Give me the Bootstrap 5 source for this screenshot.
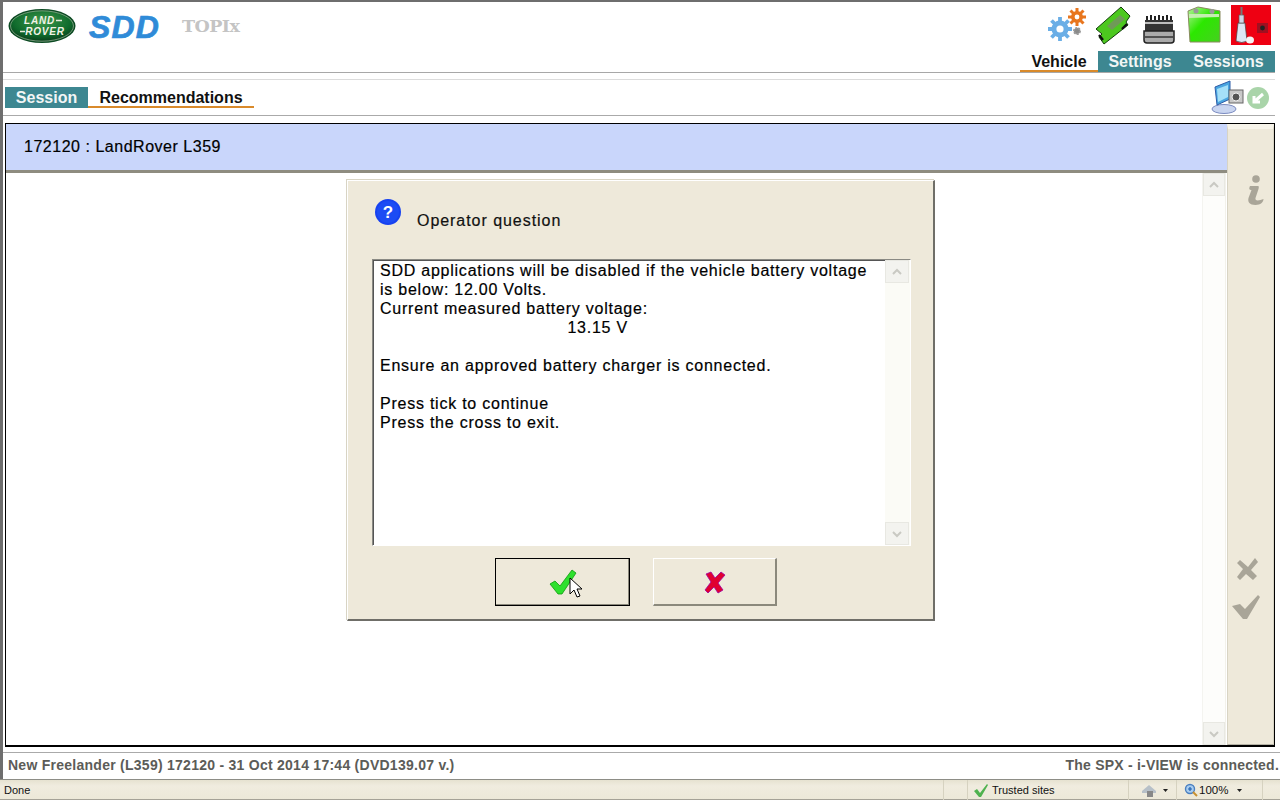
<!DOCTYPE html>
<html lang="en">
<head>
<meta charset="utf-8">
<title>SDD</title>
<link rel="stylesheet" href="https://cdn.jsdelivr.net/npm/bootstrap@5.3.0/dist/css/bootstrap.min.css">
<style>
html,body{height:100%;margin:0;overflow:hidden}
body{font-family:"Liberation Sans",Arial,sans-serif;background:#fff;color:#000}
.app-shell{width:1280px;height:800px;display:flex;flex-direction:column;background:#fff}
.app-area{height:779px;border-top:2px solid #6e6e6e;border-left:3px solid #6e6e6e;display:flex;flex-direction:column;position:relative}
.head-zone{height:71px;border-bottom:1px solid #a8a8a8;display:flex;justify-content:space-between;margin-right:5px;position:relative}
.brand-row{display:flex;align-items:flex-start;padding:6px 0 0 5px}
.sdd-word{font:italic bold 32px "Liberation Sans",sans-serif;color:#2f8bd8;margin-left:13px;line-height:38px;letter-spacing:1.1px;-webkit-text-stroke:.7px #2f8bd8}
.topix-word{font:bold 17.5px "DejaVu Serif",serif;color:#c4c4c4;margin-left:22px;line-height:36px;letter-spacing:-.5px}
.head-right{display:flex;flex-direction:column;align-items:flex-end}
.tool-icons{height:49px;display:flex;align-items:flex-start;padding:3px 4px 0 0}
.tool-icons svg{display:block;flex:none}
.tab-strip{display:flex;font-size:16px;font-weight:700;line-height:21px;height:21px;letter-spacing:0}
.tab-item{padding:0;text-align:center}
.tab-on{color:#111;box-shadow:inset 0 -2px 0 #d98a2b}
.tab-off{color:#f2f6f6;background:#3d8791}
.sub-zone{margin-top:6px;border-top:1px solid #dcdcdc;height:37px;border-bottom:1px solid #aaa;margin-right:5px;display:flex;justify-content:space-between;padding:7px 0 0 2px;position:relative}
.sub-tools{display:flex;align-items:flex-start;margin-top:-7px;padding-right:5px}
.frame-box{margin:7px 5px 0 2px;height:624px;border:1px solid #000;border-bottom-width:2px;display:flex;position:relative;background:#fff}
.frame-main{width:1221px;display:flex;flex-direction:column}
.title-band{height:46px;background:#c9d6fb;display:flex;align-items:center;padding-left:18px;font-size:16px;letter-spacing:.52px;-webkit-text-stroke:.2px #000;box-shadow:0 3px 0 #8e8c80}
.view-body{flex:1;display:flex;justify-content:flex-end;margin-top:3px;padding-right:1px}
.scroll-lane{width:24px;background:#fdfdfb;display:flex;flex-direction:column;justify-content:space-between;border-left:1px solid #f4f4f0;border-right:1px solid #f2f1ea}
.scroll-btn{width:22px;height:23px;background:#f3f3ef;border:1px solid #e8e8e2;display:flex;align-items:center;justify-content:center}
.side-rail{flex:1;background:#eee9da;border-left:1px solid #d8d4c4;border-top:5px solid #f7f4ea;border-bottom:1px solid #b5b2a5;border-right:1px solid #d8d4c4;position:relative}
.rail-glyph{position:absolute;left:6px}
.dialog-panel{position:absolute;left:341px;top:56px;width:588px;height:441px;background:#eee9da;border:1px solid #fff;border-right:2px solid #6f6e68;border-bottom:2px solid #6f6e68;box-shadow:-1px -1px 0 #d8d4c4;padding:18px 24px 0 24px}
.dialog-top{display:flex;align-items:flex-start;height:60px;padding-left:3px}
.dialog-title{font-size:16px;margin-left:16px;margin-top:12px;line-height:20px;letter-spacing:.95px;color:#111;-webkit-text-stroke:.2px #111}
.msg-box{height:287px;border:1px solid #8a8a84;border-right-color:#fff;border-bottom-color:#fff;box-shadow:inset 1px 1px 0 #555;background:#fff;display:flex;justify-content:space-between;width:539px}
.msg-text{padding:1px 0 0 7px;font-size:16px;line-height:19px;letter-spacing:.76px;white-space:pre;color:#000;-webkit-text-stroke:.2px #000}
.msg-scroll{width:25px;background:#fbfbf6;display:flex;flex-direction:column;justify-content:space-between}
.msg-scroll .scroll-btn{width:24px}
.dialog-actions{display:flex;margin-top:12px;gap:23px;padding-left:123px}
.btn-win{height:48px;padding:0;border-radius:0;background:#eee9da;border:1px solid #fff;border-right:2px solid #8b897c;border-bottom:2px solid #8b897c;display:flex;align-items:center;justify-content:center}
.btn-win:hover{background:#eee9da}
.btn-yes{width:135px;border:1px solid #000;box-shadow:inset -1px -1px 0 #8b897c}
.btn-no{width:124px}
.cursor-mark{position:absolute;left:566px;top:575px}
.status-text{flex:1;display:flex;justify-content:space-between;align-items:center;font-size:14px;font-weight:700;color:#5c5c58;padding:0 1px 2px 5px;border-top:1px solid #aaa;margin-top:5px}
.status-left{letter-spacing:.26px}
.status-right{letter-spacing:.22px}
.ie-bar{height:21px;background:linear-gradient(#e6e2d0,#f0ecdf 30%,#ece8d8);border-top:1px solid #8d8d86;display:flex;align-items:center;font:11px "Liberation Sans",sans-serif;color:#111;box-shadow:inset 0 -1px 0 #a5a297}
.ie-cell{height:100%;display:flex;align-items:center;border-left:1px solid #d6d2c0;flex:none}
.zoom-label{font-size:11.5px;width:36px}
</style>
</head>
<body>
<div class="app-shell">
  <div class="app-area">
    <div class="head-zone">
      <div class="brand-row">
        <svg width="68" height="36" viewBox="0 0 68 36">
          <defs>
            <radialGradient id="lr" cx="50%" cy="35%" r="65%"><stop offset="0" stop-color="#3f9a4c"/><stop offset=".7" stop-color="#0f6a2c"/><stop offset="1" stop-color="#0a3f1c"/></radialGradient>
            <linearGradient id="batt" x1="0" y1="0" x2="1" y2="1"><stop offset="0" stop-color="#b6f29c"/><stop offset=".45" stop-color="#2ce800"/><stop offset="1" stop-color="#46d020"/></linearGradient>
          </defs>
          <ellipse cx="34" cy="18" rx="33.5" ry="17" fill="#0b4a22"/>
          <ellipse cx="34" cy="18" rx="31.5" ry="15.2" fill="url(#lr)" stroke="#b9c9b0" stroke-width=".6"/>
          <text x="31.5" y="16" text-anchor="middle" font-family="Liberation Sans" font-style="italic" font-weight="700" font-size="10" letter-spacing=".8" fill="#f2f2e6">LAND</text>
          <text x="37" y="27" text-anchor="middle" font-family="Liberation Sans" font-style="italic" font-weight="700" font-size="10" letter-spacing=".8" fill="#f2f2e6">ROVER</text>
          <path d="M48 12.500h6M12 23.500h5" stroke="#e8e8da" stroke-width="1.4"/>
        </svg>
        <span class="sdd-word">SDD</span>
        <span class="topix-word">TOPIx</span>
      </div>
      <div class="head-right">
        <div class="tool-icons">
          <svg width="42" height="38" viewBox="0 0 42 38" style="margin:3px 5px 0 0"><g fill="#6aaee6"><circle cx="13" cy="21" r="8.500"/><g stroke="#6aaee6" stroke-width="3.8"><path d="M13 9v24M1 21h24M4.500 12.500l17 17M21.500 12.500l-17 17"/></g></g><circle cx="13" cy="21" r="3.600" fill="#fff"/><g fill="#e8761e"><circle cx="30" cy="9" r="6"/><g stroke="#e8761e" stroke-width="3"><path d="M30 0v18M21 9h18M23.500 2.500l13 13M36.500 2.500l-13 13"/></g></g><circle cx="30" cy="9" r="2.400" fill="#fff"/><circle cx="30" cy="23" r="3" fill="#8a8a8a" stroke="#9a9a9a" stroke-width="2" stroke-dasharray="2 1"/></svg>
          <svg width="38" height="40" viewBox="0 0 38 40" style="margin-right:10px"><path d="M2 24 27 2l9 9-4 6 2 3-24 19-5-7 3-3z" fill="#4cc81f" stroke="#12400a" stroke-width="1"/><path d="M13 21 26 10l5 4-13 11z" fill="#6f9a58"/><path d="M28 24l5-5M9 35l-4-5" stroke="#111" stroke-width="2.400"/></svg>
          <svg width="34" height="34" viewBox="0 0 34 34" style="margin:6px 10px 0 0"><path d="M3 9h28v12H3z" fill="#333"/><path d="M5 9V5M9 9V4M13 9V5M17 9V4M21 9V5M25 9V4M29 9V5" stroke="#222" stroke-width="2"/><path d="M3 12h28" stroke="#eee" stroke-width="1.500"/><path d="M2 20h30v9q0 3-3 3H5q-3 0-3-3z" fill="#aaa" stroke="#222" stroke-width="1.500"/><path d="M3 26h28" stroke="#333" stroke-width="1.500"/></svg>
          <svg width="36" height="38" viewBox="0 0 36 38" style="margin:1px 9px 0 0"><path d="M2 5 12 1l22 4v31H4z" fill="url(#batt)" stroke="#8a8a60" stroke-width="1"/><path d="M3 8 33 8v3L3 12z" fill="#c4efb0"/><circle cx="10" cy="5" r="2.500" fill="#999"/><circle cx="26" cy="5.500" r="2.500" fill="#999"/></svg>
          <svg width="40" height="40" viewBox="0 0 40 40"><rect width="40" height="40" fill="#ee0012"/><path d="M5 36l2-18h7l2 18q-5 3-11 0z" fill="#dde6f4" stroke="#444" stroke-width=".7"/><rect x="8" y="10" width="5" height="8" fill="#cfd8e8" stroke="#555" stroke-width=".7"/><path d="M10.500 10V2" stroke="#777" stroke-width="2"/><ellipse cx="19" cy="35" rx="4" ry="3.500" fill="#f4f4f4"/><rect x="26" y="18" width="11" height="10" fill="#a01020"/><circle cx="31.500" cy="23" r="2.400" fill="#222"/></svg>
        </div>
        <div class="tab-strip">
          <div class="tab-item tab-on" style="width:78px">Vehicle</div>
          <div class="tab-item tab-off" style="width:84px">Settings</div>
          <div class="tab-item tab-off" style="width:93px">Sessions</div>
        </div>
      </div>
    </div>
    <div class="sub-zone">
      <div class="tab-strip">
        <div class="tab-item tab-off" style="width:83px">Session</div>
        <div class="tab-item tab-on" style="width:166px">Recommendations</div>
      </div>
      <div class="sub-tools">
        <svg width="34" height="34" viewBox="0 0 34 34"><ellipse cx="14" cy="29" rx="12" ry="4.500" fill="#c9d5f0" stroke="#7b8bc0"/><path d="M5 7 20 1v18L7 25z" fill="#4aa6e0" stroke="#2d5ca8"/><path d="M7 9l11-4v12L8 22z" fill="#a5e0f8"/><rect x="19" y="10" width="14" height="13" fill="#c8c8c8" stroke="#666"/><circle cx="26" cy="17" r="4" fill="#555" stroke="#eee"/></svg>
        <svg width="24" height="24" viewBox="0 0 24 24" style="margin:6px 0 0 2px"><circle cx="12" cy="12" r="11" fill="#a9d4a9"/><path d="M17 8 9 15M8 10v6h6" stroke="#fff" stroke-width="3" fill="none"/></svg>
      </div>
    </div>
    <div class="frame-box">
      <div class="frame-main">
        <div class="title-band">172120 : LandRover L359</div>
        <div class="view-body">
          <div class="scroll-lane">
            <div class="scroll-btn"><svg width="12" height="8" viewBox="0 0 12 8"><path d="M2 6l4-4 4 4" fill="none" stroke="#c9c9c3" stroke-width="2"/></svg></div>
            <div class="scroll-btn"><svg width="12" height="8" viewBox="0 0 12 8"><path d="M2 2l4 4 4-4" fill="none" stroke="#c9c9c3" stroke-width="2"/></svg></div>
          </div>
        </div>
      </div>
      <div class="side-rail">
        <svg class="rail-glyph" style="top:45px;left:15px" width="24" height="34" viewBox="0 0 24 34"><circle cx="13" cy="5" r="3.800" fill="#a9a598"/><path d="M7 12h8c1 0 1 1 .5 3l-3 9c-.5 2 1 3 5 2l3-1c0 3-3 6-8 6-6 0-8-3-7-7l3-8c-2 0-3-1-1.500-4z" fill="#a9a598"/></svg>
        <svg class="rail-glyph" style="top:427px;left:8px" width="24" height="26" viewBox="0 0 24 26"><path d="M4 4l8 7 7-9 3 4-7 8 6 6-4 4-7-6-6 6-3-3 6-8-6-6z" fill="#a9a598"/></svg>
        <svg class="rail-glyph" style="top:465px;left:3px" width="30" height="26" viewBox="0 0 30 26"><path d="M1 12l8-2 5 5L27 1l2 2-13 22h-4z" fill="#a9a598"/></svg>
      </div>
      <div class="dialog-panel">
        <div class="dialog-top">
          <svg width="26" height="26" viewBox="0 0 26 26"><circle cx="13" cy="13" r="13" fill="#1742f0"/><circle cx="13" cy="13" r="11" fill="#1c4cf4"/><text x="13" y="19" text-anchor="middle" font-family="Liberation Sans" font-weight="700" font-size="17" fill="#fff">?</text></svg>
          <div class="dialog-title">Operator question</div>
        </div>
        <div class="msg-box">
          <div class="msg-text">SDD applications will be disabled if the vehicle battery voltage
is below: 12.00 Volts.
Current measured battery voltage:
                                    13.15 V

Ensure an approved battery charger is connected.

Press tick to continue
Press the cross to exit.</div>
          <div class="msg-scroll">
            <div class="scroll-btn"><svg width="12" height="8" viewBox="0 0 12 8"><path d="M2 6l4-4 4 4" fill="none" stroke="#c9c9c3" stroke-width="2"/></svg></div>
            <div class="scroll-btn"><svg width="12" height="8" viewBox="0 0 12 8"><path d="M2 2l4 4 4-4" fill="none" stroke="#c9c9c3" stroke-width="2"/></svg></div>
          </div>
        </div>
        <div class="dialog-actions">
          <button type="button" class="btn btn-win btn-yes" aria-label="Continue"><svg width="28" height="26" viewBox="0 0 28 26"><path d="M1 15l5-3 5 5L23 1l4 3-14 21H9z" fill="#2ee02e" stroke="#0d9a0d" stroke-width=".8"/></svg></button>
          <button type="button" class="btn btn-win btn-no" aria-label="Exit"><svg width="22" height="24" viewBox="0 0 22 24"><path d="M2 4l5-2 4 6 6-6 4 3-7 8 5 7-5 3-4-6-6 6-3-3 6-8z" fill="#e00030" stroke="#a000a0" stroke-width=".8"/></svg></button>
        </div>
      </div>
    </div>
    <div class="status-text"><span class="status-left">New Freelander (L359) 172120 - 31 Oct 2014 17:44 (DVD139.07 v.)</span><span class="status-right">The SPX - i-VIEW is connected.</span></div>
    <svg class="cursor-mark" width="14" height="22" viewBox="0 0 14 22"><path d="M1 1v16l4-4 3 7 3-1-3-7h5z" fill="#fff" stroke="#000"/></svg>
  </div>
  <div class="ie-bar">
    <div class="flex-grow-1 ps-1">Done</div>
    <div class="ie-cell" style="width:24px"></div>
    <div class="ie-cell" style="width:161px;padding-left:5px;gap:3px"><svg width="16" height="15" viewBox="0 0 16 15"><path d="M1 8l3-2 3 4L14 1l1 1-7 12H6z" fill="#4fb24f"/></svg>Trusted sites</div>
    <div class="ie-cell" style="width:48px;padding-left:11px;gap:4px"><svg width="18" height="14" viewBox="0 0 18 14"><path d="M2 8l7-6 7 6v2H2z" fill="#b7c0c8"/><rect x="7" y="8" width="6" height="6" fill="#888"/></svg><svg width="8" height="6" viewBox="0 0 8 6"><path d="M1 2h5L3.500 5z" fill="#222"/></svg></div>
    <div class="ie-cell" style="width:86px;padding-left:7px;gap:1px"><svg width="14" height="14" viewBox="0 0 14 14"><circle cx="6" cy="6" r="4.500" fill="#a8cdf0" stroke="#4a7fc0" stroke-width="1.400"/><path d="M9 9l4 4" stroke="#c89030" stroke-width="2"/><path d="M4 6h4M6 4v4" stroke="#2060b0" stroke-width="1.200"/></svg><span class="zoom-label">100%</span><svg width="8" height="6" viewBox="0 0 8 6"><path d="M1 2h5L3.500 5z" fill="#222"/></svg></div>
    <div class="ie-cell" style="width:18px"></div>
  </div>
</div>
</body>
</html>
